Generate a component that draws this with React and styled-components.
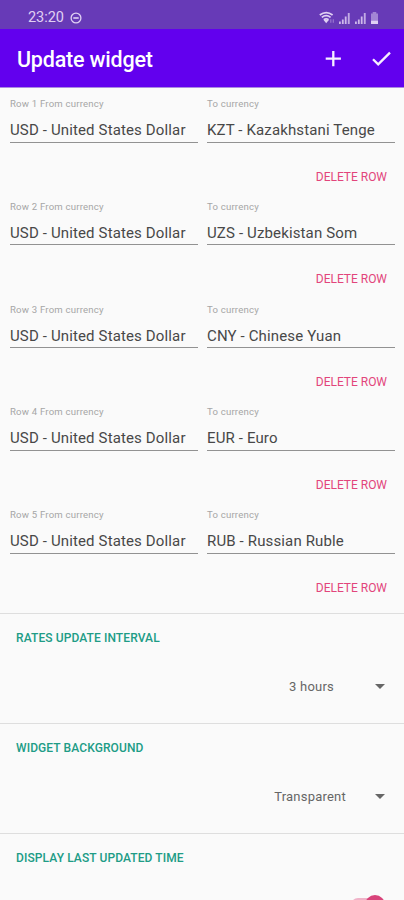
import styled, { createGlobalStyle } from 'styled-components'

const GlobalStyle = createGlobalStyle`
  * {
    box-sizing: border-box;
  }

  body {
    margin: 0;
    background: #fafafa;
    font-family: Roboto, sans-serif;
  }
`

const Screen = styled.div`
  display: flex;
  flex-direction: column;
  width: 404px;
  height: 900px;
  overflow: hidden;
  background: #fafafa;
`

const StatusBar = styled.div`
  display: flex;
  flex-shrink: 0;
  align-items: center;
  justify-content: space-between;
  height: 29px;
  padding: 6px 25px 0 28px;
  background: #673ab7;
  color: #e0d0f3;
`

const Clock = styled.div`
  display: flex;
  align-items: center;
  gap: 6px;
  font-size: 14.5px;
  letter-spacing: -0.05px;
  line-height: 18px;
`

const StatusIcons = styled.div`
  display: flex;
  align-items: flex-end;
  gap: 3px;

  svg {
    display: block;
  }
`

const AppBar = styled.header`
  display: flex;
  flex-shrink: 0;
  align-items: center;
  height: 59px;
  padding: 2px 11px 0 17px;
  background: #6200ee;
  border-bottom: 1px solid #a98ae0;
  color: #fff;
`

const Title = styled.h1`
  flex: 1;
  margin: 1px 0 0;
  font-size: 21.5px;
  font-weight: 500;
  letter-spacing: -0.2px;
  line-height: 28px;
`

const Action = styled.button`
  display: flex;
  margin: 0 0 0 24px;
  padding: 0;
  border: 0;
  background: none;
  color: #f6efff;
`

const Rows = styled.div`
  flex-shrink: 0;
  height: 525px;
  padding-top: 9px;
`

const CurrencyRow = styled.div`
  height: 102.8px;
  padding: 0 9px 0 10px;
`

const Fields = styled.div`
  display: grid;
  grid-template-columns: 188px 188px;
  column-gap: 9px;
`

const Field = styled.div`
  height: 45.6px;
  border-bottom: 1px solid #929292;
`

const Label = styled.div`
  color: #a6a6a6;
  font-size: 9.6px;
  letter-spacing: 0.2px;
  line-height: 14px;
`

const Value = styled.div`
  margin-top: 9px;
  color: #484848;
  font-size: 15px;
  letter-spacing: 0.14px;
  line-height: 20px;
  white-space: nowrap;
`

const DeleteButton = styled.button`
  display: block;
  margin: 26px 8px 0 auto;
  padding: 0;
  border: 0;
  background: none;
  color: #e2457b;
  font-family: inherit;
  font-size: 12px;
  letter-spacing: -0.02px;
  line-height: 16px;
`

const Section = styled.section`
  flex-shrink: 0;
  height: 110px;
  padding: 16px 19px 0 16px;
  border-top: 1px solid #dedede;
`

const SectionTitle = styled.h2`
  margin: 0;
  color: #209c86;
  font-size: 12px;
  font-weight: 500;
  letter-spacing: 0.1px;
  line-height: 16px;
`

const Select = styled.div`
  display: flex;
  align-items: center;
  justify-content: flex-end;
  gap: ${p => p.$gap}px;
  margin-top: 31px;
  color: #666;
  font-size: 13px;
  letter-spacing: 0.22px;
  line-height: 20px;
`

const Arrow = styled.span`
  margin-top: -1px;
  border: 5px solid transparent;
  border-top-color: #666;
  border-bottom: 0;
`

const Switch = styled.div`
  display: flex;
  justify-content: flex-end;
  align-items: center;
  width: 36px;
  height: 20px;
  margin: 29px 0 0 auto;
`

const Track = styled.div`
  width: 34px;
  height: 14px;
  border-radius: 7px;
  background: #efb3c8;
`

const Thumb = styled.div`
  flex-shrink: 0;
  width: 20px;
  height: 20px;
  margin-left: -20px;
  border-radius: 50%;
  background: #d8437a;
`

const currencies = [
  'KZT - Kazakhstani Tenge',
  'UZS - Uzbekistan Som',
  'CNY - Chinese Yuan',
  'EUR - Euro',
  'RUB - Russian Ruble',
]

const Dnd = () => (
  <svg width="12" height="12" viewBox="0 0 12 12" fill="none" stroke="currentColor" strokeWidth="1.3">
    <circle cx="6" cy="6" r="4.9" />
    <path d="M3.3 6h5.4" strokeWidth="1.6" />
  </svg>
)

const Wifi = () => (
  <svg width="16" height="13" viewBox="0 0 16 13" fill="none" stroke="currentColor">
    <path d="M.8 4Q7.2-.9 13.6 4M2.8 6.4Q7.2 3 11.6 6.4M4.8 8.7Q7.2 7 9.6 8.7" strokeWidth="1.8" />
    <path d="M4.6 9h5.2L7.2 12.2z" fill="currentColor" stroke="none" />
    <path d="M11.8 8.3v3.4M14.3 8.3v3.4" strokeWidth="1.2" opacity=".4" />
  </svg>
)

const Signal = () => (
  <svg width="13" height="12" viewBox="0 0 13 12" fill="currentColor">
    <path d="M1 9.5h1.8V12H1zM3.9 7.4h1.8V12H3.9zM6.8 4.6h1.8V12H6.8z" opacity=".85" />
    <path d="M9.8 1h1.9v11H9.8z" opacity=".75" />
  </svg>
)

const Battery = () => (
  <svg width="9" height="12" viewBox="0 0 9 12" fill="currentColor">
    <path d="M2.7 0h3.6v1.5H8V8.5H1V1.5h1.7z" opacity=".5" />
    <path d="M1 8.5h7V12H1z" />
  </svg>
)

export default function App() {
  return (
    <>
      <GlobalStyle />
      <Screen>
        <StatusBar>
          <Clock>
            23:20
            <Dnd />
          </Clock>
          <StatusIcons>
            <Wifi />
            <Signal />
            <Signal />
            <Battery />
          </StatusIcons>
        </StatusBar>
        <AppBar>
          <Title>Update widget</Title>
          <Action aria-label="Add row">
            <svg width="24" height="24" viewBox="0 0 24 24" fill="none" stroke="currentColor" strokeWidth="2.3">
              <path d="M12.3 4v15.2M4.7 11.6h15.2" />
            </svg>
          </Action>
          <Action aria-label="Save">
            <svg width="24" height="24" viewBox="0 0 24 24" fill="none" stroke="currentColor" strokeWidth="2.3">
              <path d="M4 12.2l5.2 5.2L21 5.6" />
            </svg>
          </Action>
        </AppBar>

        <Rows>
          {currencies.map((currency, i) => (
            <CurrencyRow key={currency}>
              <Fields>
                <Field>
                  <Label>Row {i + 1} From currency</Label>
                  <Value>USD - United States Dollar</Value>
                </Field>
                <Field>
                  <Label>To currency</Label>
                  <Value>{currency}</Value>
                </Field>
              </Fields>
              <DeleteButton>DELETE ROW</DeleteButton>
            </CurrencyRow>
          ))}
        </Rows>

        <Section>
          <SectionTitle>RATES UPDATE INTERVAL</SectionTitle>
          <Select $gap={41}>
            3 hours
            <Arrow />
          </Select>
        </Section>
        <Section>
          <SectionTitle>WIDGET BACKGROUND</SectionTitle>
          <Select $gap={29}>
            Transparent
            <Arrow />
          </Select>
        </Section>
        <Section>
          <SectionTitle>DISPLAY LAST UPDATED TIME</SectionTitle>
          <Switch>
            <Track />
            <Thumb />
          </Switch>
        </Section>
      </Screen>
    </>
  )
}
